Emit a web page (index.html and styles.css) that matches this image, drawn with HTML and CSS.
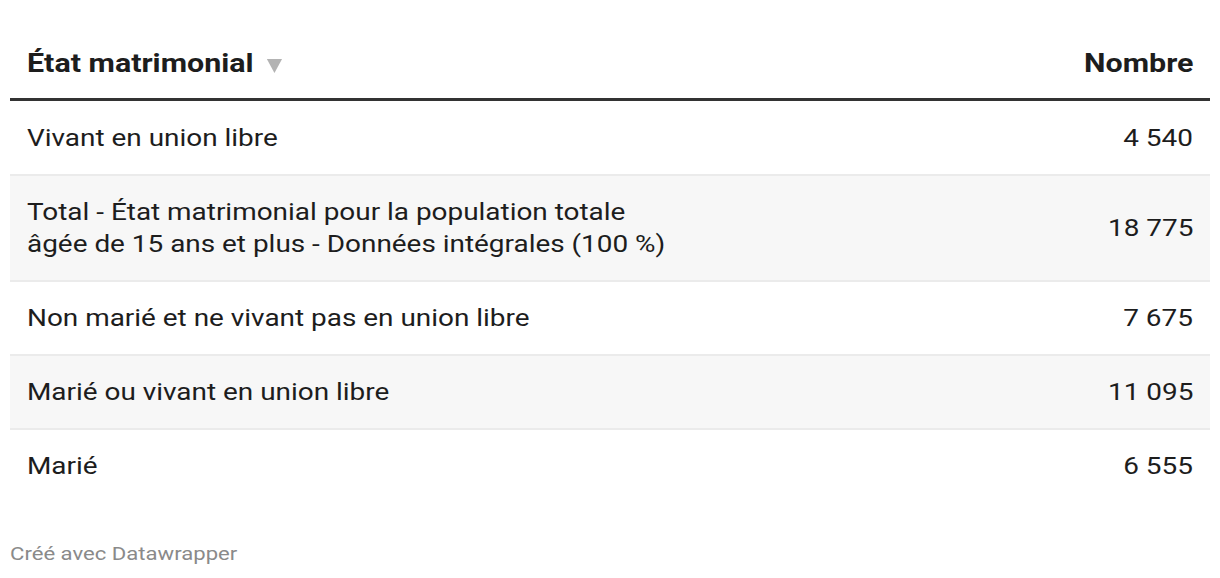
FILE: index.html
```html
<!DOCTYPE html>
<html lang="fr">
<head>
<meta charset="utf-8">
<title>État matrimonial</title>
<link rel="stylesheet" href="styles.css">
</head>
<body>
<div class="chart">
  <table class="dw-table">
    <thead>
      <tr>
        <th class="col-label"><span class="wide">État matrimonial<svg class="sort-arrow" width="13" height="14" viewBox="0 0 13 14"><polygon points="0,0 13,0 6.5,14" fill="#b3b3b3"/></svg></span></th>
        <th class="col-num"><span class="wide">Nombre</span></th>
      </tr>
    </thead>
    <tbody>
      <tr><td class="col-label"><span class="wide">Vivant en union libre</span></td><td class="col-num"><span class="wide">4 540</span></td></tr>
      <tr class="alt"><td class="col-label"><span class="wide">Total - État matrimonial pour la population totale<br>âgée de 15 ans et plus - Données intégrales (100 %)</span></td><td class="col-num"><span class="wide">18 775</span></td></tr>
      <tr><td class="col-label"><span class="wide">Non marié et ne vivant pas en union libre</span></td><td class="col-num"><span class="wide">7 675</span></td></tr>
      <tr class="alt"><td class="col-label"><span class="wide">Marié ou vivant en union libre</span></td><td class="col-num"><span class="wide">11 095</span></td></tr>
      <tr class="last"><td class="col-label"><span class="wide">Marié</span></td><td class="col-num"><span class="wide">6 555</span></td></tr>
    </tbody>
  </table>
  <div class="footer"><span class="wide">Créé avec Datawrapper</span></div>
</div>
</body>
</html>
```

FILE: styles.css
```css
html, body {
  margin: 0;
  padding: 0;
  background: #ffffff;
}
body {
  font-family: Roboto, "Liberation Sans", sans-serif;
  color: #1d1d1d;
}
.chart {
  padding: 47px 10px 0 10px;
}
.wide {
  display: inline-block;
  transform: scaleX(1.163);
  transform-origin: left center;
}
.dw-table {
  width: 100%;
  border-collapse: collapse;
  font-size: 24px;
  line-height: 32px;
}
.dw-table th {
  font-weight: 700;
  font-size: 26px;
  color: #1d1d1d;
  padding: 0 17px 19px 17px;
  border-bottom: 3px solid #333333;
  text-align: left;
}
.dw-table th .wide {
  transform: scaleX(1.17);
}
.dw-table th.col-num,
.dw-table td.col-num {
  text-align: right;
}
.dw-table .col-num .wide {
  transform-origin: right center;
}
.sort-arrow {
  margin-left: 11px;
  vertical-align: -1px;
}
.dw-table td {
  padding: 20px 17px;
  border-bottom: 2px solid #ebebeb;
  vertical-align: middle;
}
.dw-table tbody tr:first-child td {
  padding-top: 21px;
}
.dw-table tr.alt td {
  background: #f7f7f7;
}
.dw-table tr.last td {
  border-bottom: none;
}
.footer {
  margin-top: 40px;
  font-size: 19px;
  line-height: 24px;
  color: #8a8a8a;
}
```
